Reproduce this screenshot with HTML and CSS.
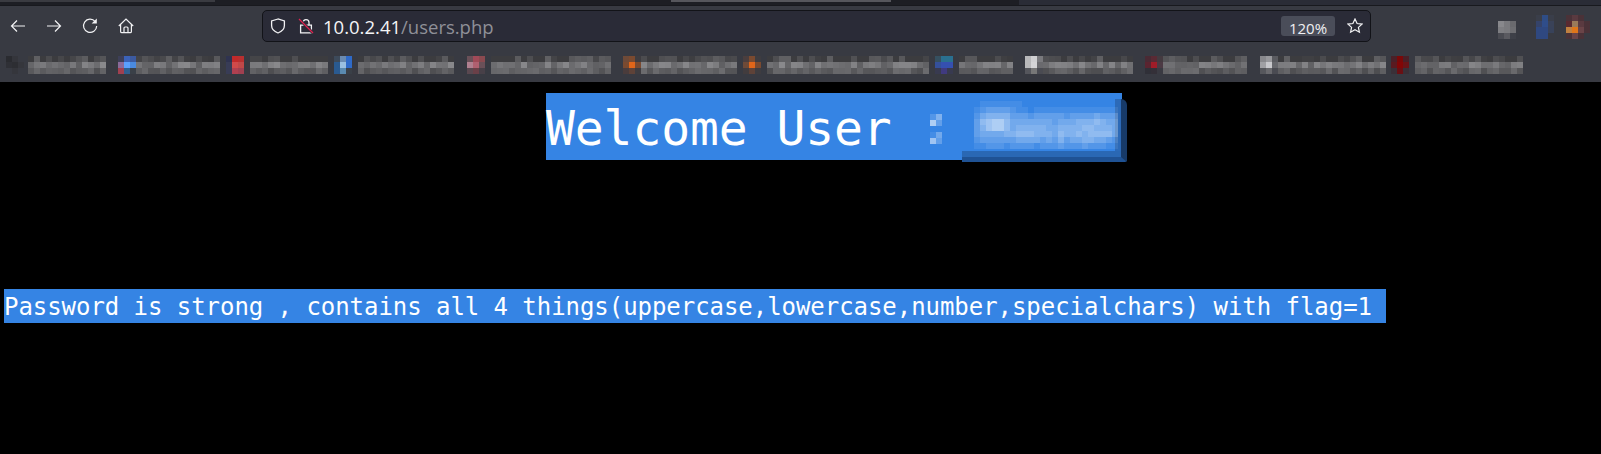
FILE: index.html
```html
<!DOCTYPE html>
<html lang="en">

<head>
    <meta charset="UTF-8" />
    <meta name="viewport" content="width=device-width, initial-scale=1.0" />
    <title>users.php</title>
    <link rel="stylesheet" href="styles.css">
</head>

<body>
    <div class="tabstrip">
        <div class="tab-edge tab-left"></div>
        <div class="tab-edge tab-mid"></div>
        <div class="tab-rest"></div>
    </div>

    <div class="toolbar">
        <svg class="nav-icon" viewBox="0 0 16 16"><path d="M15 8H1.500M7 2.500 1.500 8 7 13.500" /></svg>
        <svg class="nav-icon" viewBox="0 0 16 16"><path d="M1 8h13.500M9 2.500 14.500 8 9 13.500" /></svg>
        <svg class="nav-icon" viewBox="0 0 16 16"><path d="M13.200 3.600A6.600 6.600 0 1 0 14.700 8" /><path class="solid" d="M9.600 5.600h5.200V.6z" /></svg>
        <svg class="nav-icon" viewBox="0 0 16 16"><path d="M.8 8 8 1l7.200 7M2.600 6.800v6.600c0 .9.5 1.300 1.300 1.300h8.200c.8 0 1.300-.4 1.300-1.300V6.800M6 14.700V10c0-.6.4-1 1-1h2c.6 0 1 .4 1 1v4.700" /></svg>

        <div class="urlbar">
            <svg class="url-icon" viewBox="0 0 16 16"><path d="M8 1 1.600 3v4.600c0 3.400 2.600 6 6.400 7.400 3.800-1.400 6.400-4 6.400-7.400V3z" /></svg>
            <svg class="url-icon lock" viewBox="0 0 16 16">
                <path d="M5 7V4.600a3 3 0 0 1 6 0V7M2.600 7.200h10.800v7.600H2.600z" />
                <path class="slash-halo" d="M1 1l14 14" />
                <path class="slash" d="M1 1l14 14" />
            </svg>
            <span class="url-host">10.0.2.41</span><span class="url-path">/users.php</span>
            <span class="zoom-pill">120%</span>
            <svg class="star" viewBox="0 0 16 16"><path d="M8 1l2.100 4.500 4.900.6-3.600 3.300 1 4.800L8 11.800l-4.400 2.400 1-4.800L1 6.100l4.900-.6z" /></svg>
        </div>

        <div class="ext-icons" id="ext-icons"></div>
    </div>

    <div class="bookmarks" id="bookmarks"></div>

    <main class="page">
        <h1 class="welcome">Welcome User
            <span class="redact-edge"></span>
            <span class="mosaic colon-blur" id="colon-blur"></span>
            <span class="mosaic name-blur" id="name-blur"></span>
        </h1>
        <p class="status">Password is strong , contains all 4 things(uppercase,lowercase,number,specialchars) with flag=1</p>
    </main>

    <script src="script.js"></script>
</body>

</html>
```

FILE: styles.css
```css
* {
    box-sizing: border-box;
}

html,
body {
    margin: 0;
    height: 100%;
    overflow: hidden;
}

body {
    background-color: #000;
    font-family: "Open Sans", sans-serif;
}

/* browser chrome */
.tabstrip {
    display: flex;
    height: 6px;
    background-color: #1d1e24;
    border-bottom: 1px solid #18191e;
}

.tab-edge {
    height: 2px;
    background-color: #3a3b41;
}

.tab-left {
    width: 215px;
}

.tab-mid {
    width: 220px;
    margin-left: 456px;
    background-color: #56565c;
}

.tab-rest {
    flex: 1;
    margin-left: 128px;
    background-color: #2a2c36;
}

.toolbar {
    display: flex;
    align-items: center;
    height: 42px;
    padding: 0 0 2px 10px;
    background-color: #383a42;
}

.nav-icon {
    width: 16px;
    height: 16px;
    margin-right: 20px;
    fill: none;
    stroke: #f2f2f4;
    stroke-width: 1.2;
}

.nav-icon .solid {
    fill: #f2f2f4;
    stroke: none;
}

.urlbar {
    display: flex;
    align-items: center;
    width: 1109px;
    height: 32px;
    margin-left: 108px;
    padding-left: 7px;
    background-color: #2a2b37;
    border: 1px solid #121318;
    border-radius: 5px;
    font-size: 18.5px;
}

.url-icon {
    width: 16px;
    height: 16px;
    margin-right: 12px;
    fill: none;
    stroke: #f2f2f4;
    stroke-width: 1.3;
}

.url-icon.lock {
    margin-right: 9px;
}

.slash-halo {
    stroke: #2a2b37;
    stroke-width: 3;
}

.slash {
    stroke: #e0234f;
}

.url-host {
    color: #f4f4f6;
}

.url-path {
    color: #8f9097;
}

.zoom-pill {
    margin-left: auto;
    width: 54px;
    height: 20px;
    padding-top: 4px;
    background-color: #4a4d59;
    border-radius: 3px;
    color: #f0f0f2;
    font-size: 15px;
    line-height: 16px;
    text-align: center;
}

.star {
    width: 16px;
    height: 16px;
    margin: 0 7px 0 12px;
    fill: none;
    stroke: #f2f2f4;
    stroke-width: 1.2;
}

.ext-icons {
    display: flex;
    align-items: flex-end;
    height: 25px;
    margin-left: 127px;
}

.bookmarks {
    display: flex;
    height: 34px;
    padding-top: 8px;
    background-color: #383a42;
}

.bm {
    display: flex;
    flex: none;
}

.cells {
    display: grid;
    grid-auto-rows: 6px;
    grid-auto-columns: 6px;
    flex: none;
}

/* page */
.page {
    background-color: #000;
}

.welcome {
    position: relative;
    width: 576px;
    height: 67px;
    margin: 11px 0 0 546px;
    padding-top: 4px;
    background-color: #3584e4;
    color: #fff;
    font-family: "DejaVu Sans Mono", monospace;
    font-size: 48px;
    font-weight: 400;
    letter-spacing: -0.1px;
    line-height: 63px;
    white-space: nowrap;
}

.mosaic {
    position: absolute;
    display: grid;
    grid-auto-rows: 6px;
    grid-auto-columns: 6px;
}

.colon-blur {
    left: 384px;
    top: 21px;
}

.name-blur {
    left: 422px;
    top: 8px;
}

.redact-edge {
    position: absolute;
    left: 416px;
    top: 6px;
    width: 165px;
    height: 63px;
    border-right: 6px solid #173a68;
    border-bottom: 5px solid #1f5294;
    background:
        linear-gradient(#2a68b4, #2a68b4) left bottom / 100% 6px no-repeat,
        linear-gradient(#2c6ab8, #2c6ab8) right top / 6px 100% no-repeat;
    border-radius: 0 6px 2px 0;
}

.status {
    width: fit-content;
    height: 34px;
    margin: 129px 0 0 4px;
    padding: 3px 14px 0 0;
    background-color: #3584e4;
    color: #fff;
    font-family: "DejaVu Sans Mono", monospace;
    font-size: 24px;
    letter-spacing: -0.05px;
    line-height: 31px;
    white-space: nowrap;
}
```

FILE: script.js
```js
// x start, x of the label, x end of the label, favicon colours (3 rows)
const bookmarks = [
    [6, 28, 106, ["#2a2b30 #34353b #383a42", "#2f3036 #2d2e33 #35363c", "#383a42 #35363c #383a42"]],
    [118, 136, 220, ["#3d3f58 #3b62b8 #3c5aa0", "#8a6a9a #5aa0ff #4a8adf", "#a04050 #2f5f90 #3a4048"]],
    [226, 250, 327, ["#2f3350 #c22a2a #b83030", "#383c56 #d04a4a #c04848", "#383c56 #b04050 #a04050"]],
    [334, 358, 455, ["#3d4a5a #6a8ab0 #2f6ac8", "#2a5a90 #9abfe0 #2f6ac8", "#2a5a90 #5a8ab0 #3a4048"]],
    [467, 491, 611, ["#6a5058 #a04a58 #8a4a50", "#b08090 #b06070 #6a5058", "#5a4850 #6a4048 #484048"]],
    [623, 641, 737, ["#6e4a38 #7a4a30 #3e3c40", "#7a4a30 #e0661a #7a4a30", "#4a3c3c #5e4238 #3e3c40"]],
    [743, 767, 929, ["#4a3e3e #7a4a30 #3e3c40", "#6e4a38 #e0661a #7a4a30", "#423c3e #5e4238 #3e3c40"]],
    [935, 959, 1013, ["#365060 #2a7090 #2a7090", "#35509a #3550b0 #3550b0", "#383a50 #403a80 #383a50"]],
    [1025, 1043, 1134, ["#b8b8ba #d0d0d2 #7a7a7e", "#b8b8ba #d4d4d6 #6a6a6e", "#55565c #777 #4a4b52"]],
    [1145, 1163, 1248, ["#4a2a34 #5a2a34 #443a40", "#5a2430 #a01c28 #4c3a44", "#303038 #343038 #3a3a42"]],
    [1260, 1278, 1385, ["#88888c #98989c #5a5b60", "#a0a0a4 #c8c8cc #66676c", "#56575c #6a6a6e #4a4b52"]],
    [1391, 1415, 1523, ["#4a2028 #7a0808 #4a2028", "#5a1a20 #820606 #6a1418", "#3a3038 #6a1014 #3a3038"]]
];

// 3x4 pixel blocks of the blurred toolbar buttons
const extIcons = [
    { gap: 0, rows: ["#383a42 #383a42 #383a42", "#88888c #7a7a7e #6a6a6e", "#7e7e82 #7a7a7e #6e6e72", "#4a4b52 #5a5a60 #3e4048"] },
    { gap: 20, rows: ["#3a3e4a #2f4d86 #3a3e4a", "#35436a #2f4d8a #3a4258", "#2f4880 #2f4880 #38425a", "#2f4880 #2f4880 #383a42"] },
    { gap: 12, rows: ["#4a3238 #5a3a40 #4a3238 #383a42", "#5a2a30 #9a7a5a #5a3a40 #4a3238", "#c08040 #e0761a #6a4448 #4a3238", "#4a3238 #6a4448 #4a3238 #383a42"] }
];

// brightness of the cells over the selected name, 0 to 9
const nameRows = [
    "00111111100000000000000000",
    "01233332110111111111111110",
    "02455553332333332333343330",
    "03678864444444344455565440",
    "03578864555554455556655540",
    "03444455666555465565666640",
    "02333333444434353445544320",
    "01122212222122232223222110"
];
const colonRows = ["25", "83", "00", "14", "73"];

function cellGrid(el, rows, paint) {
    rows.forEach((row, y) => {
        row.forEach((value, x) => {
            const cell = document.createElement("span");
            cell.style.gridRow = y + 1;
            cell.style.gridColumn = x + 1;
            cell.style.background = paint(value);
            el.appendChild(cell);
        });
    });
}

// same label every time, the text under it is unreadable anyway
function labelRows(width, seed) {
    const cols = Math.round(width / 6);
    let n = seed * 7919 + 13;
    const next = () => {
        n = (n * 1103515245 + 12345) % 2147483648;
        return (n >> 8) % 100 / 100;
    };
    const rows = [[], [], []];
    for (let x = 0; x < cols; x++) {
        rows[0].push(next() > 0.4 ? 62 + next() * 34 : 60);
        rows[1].push(95 + next() * 42);
        rows[2].push(78 + next() * 30);
    }
    return rows;
}

const bar = document.getElementById("bookmarks");
let lastEnd = 0;
bookmarks.forEach((b, i) => {
    const item = document.createElement("div");
    item.className = "bm";
    item.style.marginLeft = (b[0] - lastEnd) + "px";

    const icon = document.createElement("div");
    icon.className = "cells";
    cellGrid(icon, b[3].map(r => r.split(" ")), c => c);
    item.appendChild(icon);

    const label = document.createElement("div");
    label.className = "cells";
    label.style.marginLeft = (b[1] - b[0] - 18) + "px";
    label.style.width = (b[2] - b[1]) + "px";
    cellGrid(label, labelRows(b[2] - b[1], i + 1), v => `rgb(${v},${v},${v + 3})`);
    item.appendChild(label);

    bar.appendChild(item);
    lastEnd = b[2];
});

const ext = document.getElementById("ext-icons");
extIcons.forEach(e => {
    const icon = document.createElement("div");
    icon.className = "cells";
    icon.style.marginLeft = e.gap + "px";
    cellGrid(icon, e.rows.map(r => r.split(" ")), c => c);
    ext.appendChild(icon);
});

const white = d => `rgba(255,255,255,${d * 0.075})`;
cellGrid(document.getElementById("name-blur"), nameRows.map(r => r.split("")), white);
cellGrid(document.getElementById("colon-blur"), colonRows.map(r => r.split("")), white);
```
